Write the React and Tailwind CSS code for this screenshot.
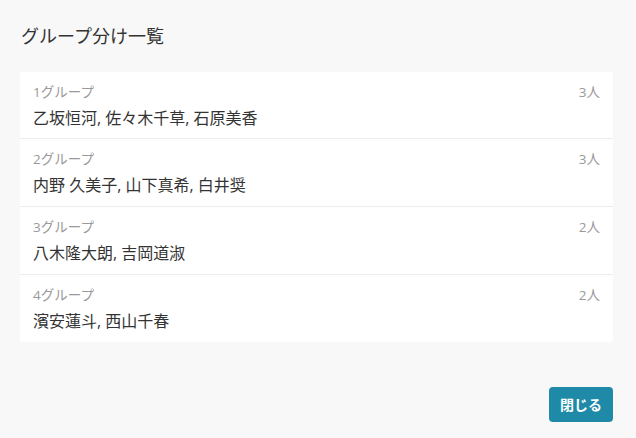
const groups = [
  { name: "1グループ", members: "乙坂恒河, 佐々木千草, 石原美香", count: "3人" },
  { name: "2グループ", members: "内野 久美子, 山下真希, 白井奨", count: "3人" },
  { name: "3グループ", members: "八木隆大朗, 吉岡道淑", count: "2人" },
  { name: "4グループ", members: "濱安蓮斗, 西山千春", count: "2人" },
];

export default function App() {
  return (
    <div
      className="w-[636px] h-[438px] bg-[#f8f8f8] px-5 pt-[24px] text-[#333]"
      style={{ fontFamily: '"Open Sans", "Noto Sans CJK JP", sans-serif' }}
    >
      <h1 className="text-[18px] leading-[24px] pl-[1px] text-[#333]">グループ分け一覧</h1>

      <div className="mt-[24px] w-[593px] bg-white rounded-[3px]">
        {groups.map((g, i) => (
          <div
            key={g.name}
            className={`flex justify-between pl-[13px] pr-[13px] pt-[10px] ${i > 0 ? "h-[68px] border-t border-[#ececec]" : "h-[66px]"}`}
          >
            <div>
              <div className="text-[13.5px] leading-[20px] text-[#999]">{g.name}</div>
              <div className="text-[16px] leading-[24px] mt-[4px] text-[#333]">{g.members}</div>
            </div>
            <div className="text-[13.5px] leading-[20px] text-[#999]">{g.count}</div>
          </div>
        ))}
      </div>

      <div className="flex justify-end w-[593px] mt-[45px]">
        <button className="w-[64px] h-[35px] rounded-[4px] bg-[#1e8aa8] text-white text-[14px] font-bold">
          閉じる
        </button>
      </div>
    </div>
  );
}
